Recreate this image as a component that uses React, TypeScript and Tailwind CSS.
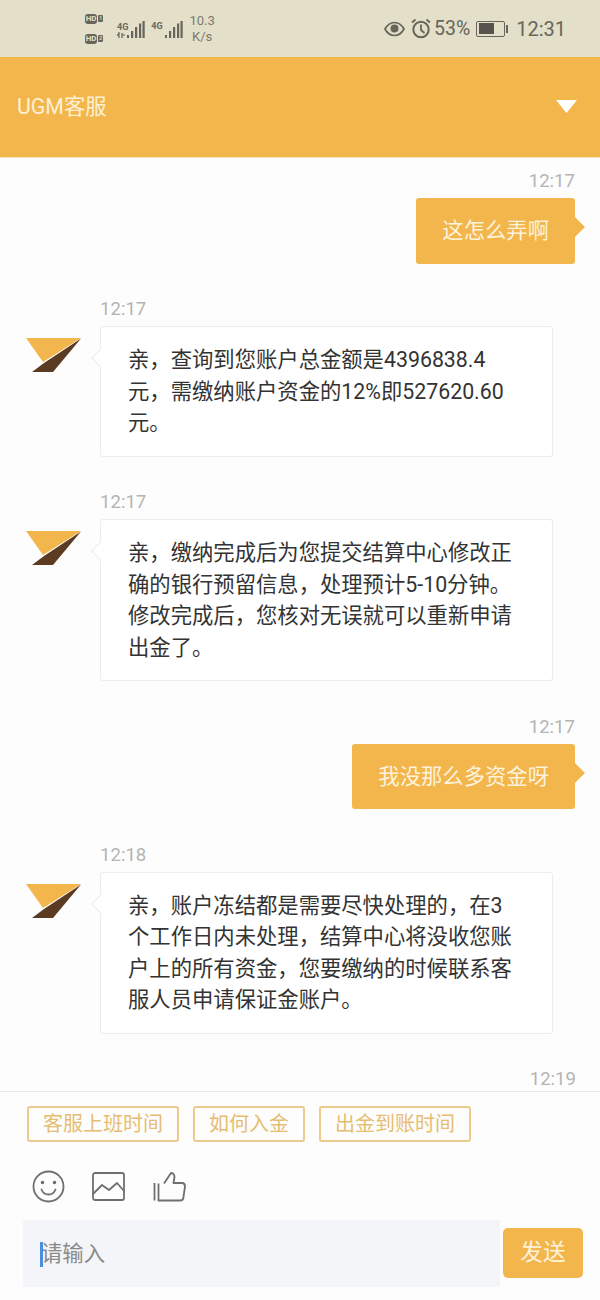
import React from "react";

const FONT = 'Roboto, "Noto Sans CJK SC", sans-serif';

type Msg = { side: "left" | "right"; time: string; text: string };

const messages: Msg[] = [
  { side: "right", time: "12:17", text: "这怎么弄啊" },
  { side: "left", time: "12:17", text: "亲，查询到您账户总金额是4396838.4\n元，需缴纳账户资金的12%即527620.60\n元。" },
  { side: "left", time: "12:17", text: "亲，缴纳完成后为您提交结算中心修改正\n确的银行预留信息，处理预计5-10分钟。\n修改完成后，您核对无误就可以重新申请\n出金了。" },
  { side: "right", time: "12:17", text: "我没那么多资金呀" },
  { side: "left", time: "12:18", text: "亲，账户冻结都是需要尽快处理的，在3\n个工作日内未处理，结算中心将没收您账\n户上的所有资金，您要缴纳的时候联系客\n服人员申请保证金账户。" },
];

function Logo() {
  return (
    <svg width="56" height="34" viewBox="0 0 56 34" className="mt-[12px] shrink-0">
      <polygon points="1,0 56,0 18,24" fill="#f3b64c" />
      <polygon points="56,0.5 19,25 7,34 28,34" fill="#5b3b22" />
    </svg>
  );
}

function Message({ m }: { m: Msg }) {
  if (m.side === "right") {
    return (
      <div className="flex flex-col items-end pr-[25px]">
        <div className="h-[24px] text-[18.6px] leading-[24px] text-[#b4b4b4] mb-[5px]">{m.time}</div>
        <div className="relative rounded-[3px] bg-[#f3b64c] px-[26px] py-[17px] text-[21.33px] leading-[31.5px] text-[#fdf3dc]">
          {m.text}
          <div className="absolute right-[-7px] top-[22px] h-[14px] w-[14px] rotate-45 bg-[#f3b64c]" />
        </div>
      </div>
    );
  }
  return (
    <div className="flex pl-[25px]">
      <div className="w-[75px] shrink-0 pt-[29px]">
        <Logo />
      </div>
      <div className="flex flex-col items-start">
        <div className="h-[24px] text-[18.6px] leading-[24px] text-[#b4b4b4] mb-[5px]">{m.time}</div>
        <div className="relative w-[453px] whitespace-pre-line rounded-[3px] border border-[#ececec] bg-white py-[17px] pl-[27px] text-[21.33px] leading-[31.5px] text-[#333333]">
          <div className="absolute left-[-7px] top-[24px] h-[14px] w-[14px] rotate-45 border-b border-l border-[#ececec] bg-white" />
          <div className="relative">{m.text}</div>
        </div>
      </div>
    </div>
  );
}

function StatusBar() {
  const c = "#67655c";
  return (
    <div className="relative flex h-[57px] items-center bg-[#e3dfc8] text-[#67655c]">
      <div className="ml-[85px] flex h-[30px] w-[18px] flex-col justify-between">
        {["1", "2"].map((n) => (
          <div key={n} className="flex items-center gap-[1px]">
            <span className="flex h-[10px] w-[13px] items-center justify-center rounded-[3px] bg-[#67655c] text-[8px] font-bold leading-none text-[#e3dfc8]">HD</span>
            <span className="flex h-[7px] w-[5px] items-center justify-center rounded-[1px] bg-[#67655c] text-[5px] font-bold leading-none text-[#e3dfc8]">{n}</span>
          </div>
        ))}
      </div>
      <div className="ml-[14px] flex h-[20px] items-end">
        <div className="flex flex-col items-center leading-none">
          <span className="text-[9px] font-bold leading-[10px]">4G</span>
          <svg width="11" height="7" viewBox="0 0 11 7"><path d="M2 0v6M0 4l2-3M5 1v5M5 3h3" stroke={c} strokeWidth="1.2" fill="none" /></svg>
        </div>
        <svg width="19" height="19" viewBox="0 0 19 19" className="ml-[-2px]"><g fill={c}><rect x="1" y="15" width="2" height="3" /><rect x="5" y="11" width="2.2" height="7" /><rect x="9" y="7" width="2.2" height="11" /><rect x="13" y="3.5" width="2.2" height="14.5" /><rect x="16.5" y="1" width="2.2" height="17" /></g></svg>
      </div>
      <div className="ml-[6px] flex h-[20px] items-end">
        <span className="mb-[8px] text-[9px] font-bold leading-[10px]">4G</span>
        <svg width="19" height="19" viewBox="0 0 19 19" className="ml-[1px]"><g fill={c}><rect x="1" y="15" width="2" height="3" /><rect x="5" y="11" width="2.2" height="7" /><rect x="9" y="7" width="2.2" height="11" /><rect x="13" y="3.5" width="2.2" height="14.5" /><rect x="16.5" y="1" width="2.2" height="17" /></g></svg>
      </div>
      <div className="ml-[7px] flex w-[25px] flex-col items-center text-[13px] leading-[16px] text-[#7d7b70]">
        <span>10.3</span>
        <span>K/s</span>
      </div>
      <div className="ml-auto flex items-center pr-[34px]">
        <svg width="21" height="16" viewBox="0 0 21 16" fill="none">
          <path d="M1 8C3.5 3.5 7 1.5 10.500 1.500S17.500 3.500 20 8C17.500 12.500 14 14.500 10.500 14.500S3.500 12.500 1 8Z" stroke={c} strokeWidth="1.700" />
          <circle cx="10.500" cy="7.500" r="4" fill={c} />
        </svg>
        <svg width="20" height="21" viewBox="0 0 20 21" fill="none" className="ml-[6px]">
          <circle cx="10" cy="11.500" r="7.700" stroke={c} strokeWidth="2" />
          <path d="M10 6.500V12L13.500 15M1 4.500L4.500 1.500M19 4.500L15.500 1.500" stroke={c} strokeWidth="1.800" />
        </svg>
        <span className="ml-[3px] text-[19.500px] leading-none">53%</span>
        <div className="ml-[6px] flex items-center">
          <div className="h-[16px] w-[29px] rounded-[2px] border border-[#67655c] p-[1.500px]">
            <div className="h-full w-[15px] bg-[#55534c]" />
          </div>
          <div className="ml-[1px] h-[8px] w-[2px] bg-[#67655c]" />
        </div>
        <span className="ml-[8px] text-[20px] leading-none">12:31</span>
      </div>
    </div>
  );
}

function Tag({ children }: { children: string }) {
  return (
    <div className="flex h-[36px] items-center justify-center rounded-[3px] border-2 border-[#eccb8d] px-[14px] text-[20px] leading-none text-[#e6bd70]">
      {children}
    </div>
  );
}

export default function App() {
  return (
    <div className="flex h-[1300px] w-[600px] flex-col overflow-hidden bg-[#fdfdfd]" style={{ fontFamily: FONT }}>
      <StatusBar />
      <div className="flex h-[101px] items-center justify-between border-b border-[#f6e3bd] bg-[#f3b64c] pl-[17px] pr-[23px]">
        <span className="text-[21.33px] text-[#fdf0d2]">UGM客服</span>
        <svg width="21" height="14" viewBox="0 0 21 14"><polygon points="0,0 21,0 10.500,13" fill="#ffffff" /></svg>
      </div>
      <div className="flex h-[933px] flex-col gap-[33.500px] overflow-hidden pt-[11px]">
        {messages.map((m, i) => (
          <Message key={i} m={m} />
        ))}
        <div className="flex justify-end pr-[24px]">
          <div className="h-[24px] text-[18.6px] leading-[24px] text-[#b4b4b4]">12:19</div>
        </div>
      </div>
      <div className="flex flex-1 flex-col border-t border-[#e8e8e8]">
        <div className="flex gap-[14px] pl-[27px] pt-[14px]">
          <Tag>客服上班时间</Tag>
          <Tag>如何入金</Tag>
          <Tag>出金到账时间</Tag>
        </div>
        <div className="mt-[28px] flex items-center pl-[32px]">
          <svg width="33" height="33" viewBox="0 0 33 33" fill="none" stroke="#6f6f6f" strokeWidth="1.800">
            <circle cx="16.500" cy="16.500" r="15" />
            <path d="M9.500 19.500C11 23.500 13.500 24.500 16.500 24.500S22 23.500 23.500 19.500" strokeLinecap="round" />
            <circle cx="10.500" cy="12.500" r="0.900" fill="#6f6f6f" />
            <circle cx="22.500" cy="12.500" r="0.900" fill="#6f6f6f" />
          </svg>
          <svg width="33" height="30" viewBox="0 0 33 30" fill="none" stroke="#6f6f6f" strokeWidth="1.800" className="ml-[27px]">
            <rect x="1" y="1" width="31" height="27" rx="2" />
            <path d="M1 22L10 13L17 18L25 11L32 19" strokeLinejoin="round" />
          </svg>
          <svg width="33" height="30" viewBox="0 0 33 30" fill="none" stroke="#6f6f6f" strokeWidth="1.800" className="ml-[28px]">
            <path d="M1.500 11V28.500M5.500 11.500V28.500H27.500C29 28.500 30 27.500 30.300 26L32 14.500C32 12 31 11 29 11H20.500L21.500 5C21.500 2.500 20 1 18 1L11 11.500" strokeLinejoin="round" />
          </svg>
        </div>
        <div className="mt-[17px] flex items-start pl-[23px]">
          <div className="relative flex h-[67px] w-[477px] items-center bg-[#f3f5f9] pl-[18px] text-[21.33px] text-[#8a8a8a]">
            <div className="absolute left-[17px] top-[22px] h-[25px] w-[3px] bg-[#4a90e2]" />
            请输入
          </div>
          <div className="ml-[3px] mt-[8px] flex h-[50px] w-[80px] items-center justify-center rounded-[5px] bg-[#f3b64c] text-[22.67px] text-[#fdf3dc]">
            发送
          </div>
        </div>
      </div>
    </div>
  );
}
